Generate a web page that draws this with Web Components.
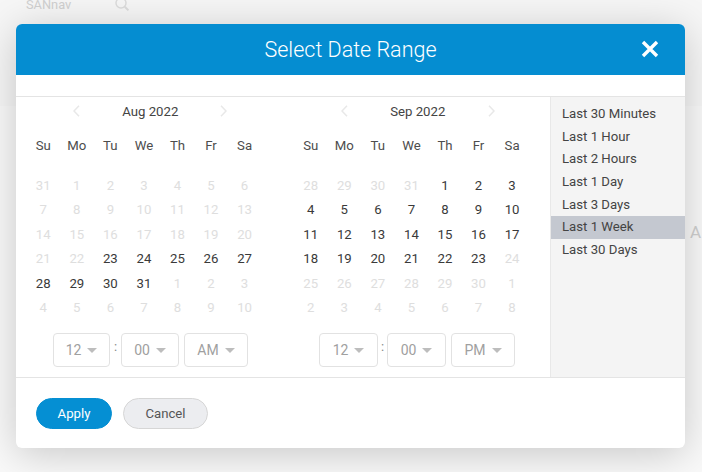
<!DOCTYPE html>
<html>
<head>
<meta charset="utf-8">
<title>Select Date Range</title>
<style>
  html, body { margin: 0; height: 100%; }
  body { width: 702px; height: 472px; overflow: hidden; background: #f8f8f8; font-family: Roboto, "Liberation Sans", sans-serif; }
</style>
</head>
<body>
<app-backdrop>
  <range-modal heading="Select Date Range">
    <date-calendar slot="calendars" month="Aug 2022" first="31" lead="31" from="23" to="31" ampm="AM" times="57,58,64" gaps="11,5" inset="26.5"></date-calendar>
    <date-calendar slot="calendars" month="Sep 2022" first="28" lead="31" from="1" to="23" ampm="PM" times="59,59,64" gaps="9,5" inset="25"></date-calendar>
    <range-list slot="ranges" selected="Last 1 Week"></range-list>
    <pill-button slot="actions" kind="primary">Apply</pill-button>
    <pill-button slot="actions">Cancel</pill-button>
  </range-modal>
</app-backdrop>

<script>
const CHEVRON = d => `<svg width="7" height="12" viewBox="0 0 7 12"><path d="${d}" fill="none" stroke="#e8e8e8" stroke-width="1.5"/></svg>`

class AppBackdrop extends HTMLElement {
  constructor () {
    super()
    this.attachShadow({ mode: 'open' })
    this.shadowRoot.innerHTML = `<style>
      :host { display: block; position: relative; width: 702px; height: 472px; overflow: hidden;
        background: linear-gradient(to bottom, #f6f6f6 0, #f6f6f6 106px, #f9f9f9 106px, #f9f9f9 100%); }
      .ghost { position: absolute; color: #d0d0d0; font-size: 12.8px; line-height: 10px; }
      .brand { left: 26px; top: 0; }
      .search { left: 114px; top: -4px; }
      .letter { left: 690px; top: 222px; font-size: 17px; line-height: 20px; color: #cfcfcf; }
      .stage { position: relative; padding: 24px 16px 0 16px; }
    </style>
    <div class="ghost brand">SANnav</div>
    <svg class="ghost search" width="16" height="16" viewBox="0 0 16 16"><circle cx="7" cy="7" r="5" fill="none" stroke="#dcdcdc" stroke-width="1.5"/><path d="M10.8 10.8l3.6 3.6" stroke="#dcdcdc" stroke-width="2"/></svg>
    <div class="ghost letter">A</div>
    <div class="stage"><slot></slot></div>`
  }
}

class RangeModal extends HTMLElement {
  constructor () {
    super()
    this.attachShadow({ mode: 'open' })
    const heading = this.getAttribute('heading')
    this.shadowRoot.innerHTML = `<style>
      :host { display: block; width: 669px; height: 424px; background: #fff; border-radius: 6px;
        box-shadow: 0 6px 40px rgba(0,0,0,.2); overflow: hidden; }
      header { height: 51px; background: #058dd1; color: #fff; display: flex; align-items: center; justify-content: center;
        position: relative; font-weight: 300; font-size: 21.5px; }
      header svg { position: absolute; right: 25px; top: 15px; }
      .strip { height: 21px; border-bottom: 1px solid #e4e4e4; }
      .body { display: flex; height: 280px; border-bottom: 1px solid #e4e4e4; }
      .left { flex: 1; display: flex; gap: 33px; padding-left: 10.5px; }
      .right { width: 134px; flex: none; background: #f4f4f4; border-left: 1px solid #e8e8e8; }
      footer { display: flex; gap: 11px; padding: 20px 20px 0; }
    </style>
    <header>${heading}<svg width="20" height="20" viewBox="0 0 20 20"><path d="M3 3l14 14M17 3L3 17" stroke="#fff" stroke-width="3.4" fill="none"/></svg></header>
    <div class="strip"></div>
    <div class="body">
      <div class="left"><slot name="calendars"></slot></div>
      <div class="right"><slot name="ranges"></slot></div>
    </div>
    <footer><slot name="actions"></slot></footer>`
  }
}

class DateCalendar extends HTMLElement {
  constructor () {
    super()
    this.attachShadow({ mode: 'open' })
    const month = this.getAttribute('month')
    const first = +this.getAttribute('first')
    const lead = +this.getAttribute('lead')
    const from = +this.getAttribute('from')
    const to = +this.getAttribute('to')
    const ampm = this.getAttribute('ampm')
    const [w1, w2, w3] = this.getAttribute('times').split(',')
    const [g1, g2] = this.getAttribute('gaps').split(',')
    const days = ['Su', 'Mo', 'Tu', 'We', 'Th', 'Fr', 'Sa']

    // 6 rows: tail of the last month, this month, head of the next one
    const cells = []
    for (let d = first; d <= lead; d++) cells.push([d, true])
    const len = month.startsWith('Aug') ? 31 : 30
    for (let d = 1; d <= len; d++) cells.push([d, d < from || d > to])
    for (let d = 1; cells.length < 42; d++) cells.push([d, true])

    this.shadowRoot.innerHTML = `<style>
      :host { display: block; width: 234.5px; color: #444; font-size: 13.2px; }
      .head { display: flex; align-items: center; justify-content: center; height: 28px; padding: 0 0 0 13px; }
      .head b { font-weight: 400; width: 140px; text-align: center; }
      .head svg { flex: none; }
      .week, .grid { display: grid; grid-template-columns: repeat(7, 33.55px); text-align: center; }
      .week { height: 20px; line-height: 20px; margin-top: 11px; color: #4d4d4d; }
      .grid { grid-auto-rows: 24.4px; line-height: 24.4px; margin-top: 18px; color: #3a3a3a; }
      .grid .off { color: #dedede; }
      .time { display: flex; align-items: flex-start; padding-left: ${this.getAttribute('inset')}px; margin-top: 13px; }
      .colon { width: ${g1}px; text-align: center; color: #888; font-size: 13px; line-height: 28px; }
      .ap { margin-left: ${g2}px; }
    </style>
    <div class="head">${CHEVRON('M6 .7L1 6l5 5.3')}<b>${month}</b>${CHEVRON('M1 .7L6 6l-5 5.3')}</div>
    <div class="week">${days.map(d => `<span>${d}</span>`).join('')}</div>
    <div class="grid">${cells.map(([d, off]) => `<span class="${off ? 'off' : ''}">${d}</span>`).join('')}</div>
    <div class="time">
      <time-select value="12" width="${w1}"></time-select><span class="colon">:</span>
      <time-select value="00" width="${w2}"></time-select><time-select class="ap" value="${ampm}" width="${w3}"></time-select>
    </div>`
  }
}

class TimeSelect extends HTMLElement {
  constructor () {
    super()
    this.attachShadow({ mode: 'open' })
    this.shadowRoot.innerHTML = `<style>
      :host { display: inline-flex; box-sizing: border-box; height: 34px; width: ${this.getAttribute('width')}px;
        border: 1px solid #e2e2e2; border-radius: 4px; align-items: center; justify-content: center; gap: 6px;
        color: #a0a0a0; font-size: 14px; background: #fff; }
      i { width: 0; height: 0; border: 5px solid transparent; border-top: 5px solid #bdbdbd; border-bottom: 0; }
    </style>${this.getAttribute('value')}<i></i>`
  }
}

class RangeList extends HTMLElement {
  constructor () {
    super()
    this.attachShadow({ mode: 'open' })
    const selected = this.getAttribute('selected')
    const items = ['Last 30 Minutes', 'Last 1 Hour', 'Last 2 Hours', 'Last 1 Day', 'Last 3 Days', 'Last 1 Week', 'Last 30 Days']
    this.shadowRoot.innerHTML = `<style>
      :host { display: block; padding-top: 6px; color: #444; font-size: 13.2px; }
      div { height: 22.7px; line-height: 22.7px; padding-left: 11px; }
      .on { background: #c4c8d0; }
    </style>${items.map(i => `<div class="${i === selected ? 'on' : ''}">${i}</div>`).join('')}`
  }
}

class PillButton extends HTMLElement {
  constructor () {
    super()
    this.attachShadow({ mode: 'open' })
    const primary = this.getAttribute('kind') === 'primary'
    this.shadowRoot.innerHTML = `<style>
      :host { display: inline-flex; box-sizing: border-box; height: 31px; border-radius: 16px; align-items: center;
        justify-content: center; font-size: 13.2px; width: ${primary ? 76 : 85}px;
        background: ${primary ? '#058fd3' : '#ecedf0'}; color: ${primary ? '#fff' : '#555'};
        border: 1px solid ${primary ? '#058fd3' : '#d6d6d6'}; }
    </style><slot></slot>`
  }
}

customElements.define('app-backdrop', AppBackdrop)
customElements.define('range-modal', RangeModal)
customElements.define('time-select', TimeSelect)
customElements.define('date-calendar', DateCalendar)
customElements.define('range-list', RangeList)
customElements.define('pill-button', PillButton)
</script>
</body>
</html>
